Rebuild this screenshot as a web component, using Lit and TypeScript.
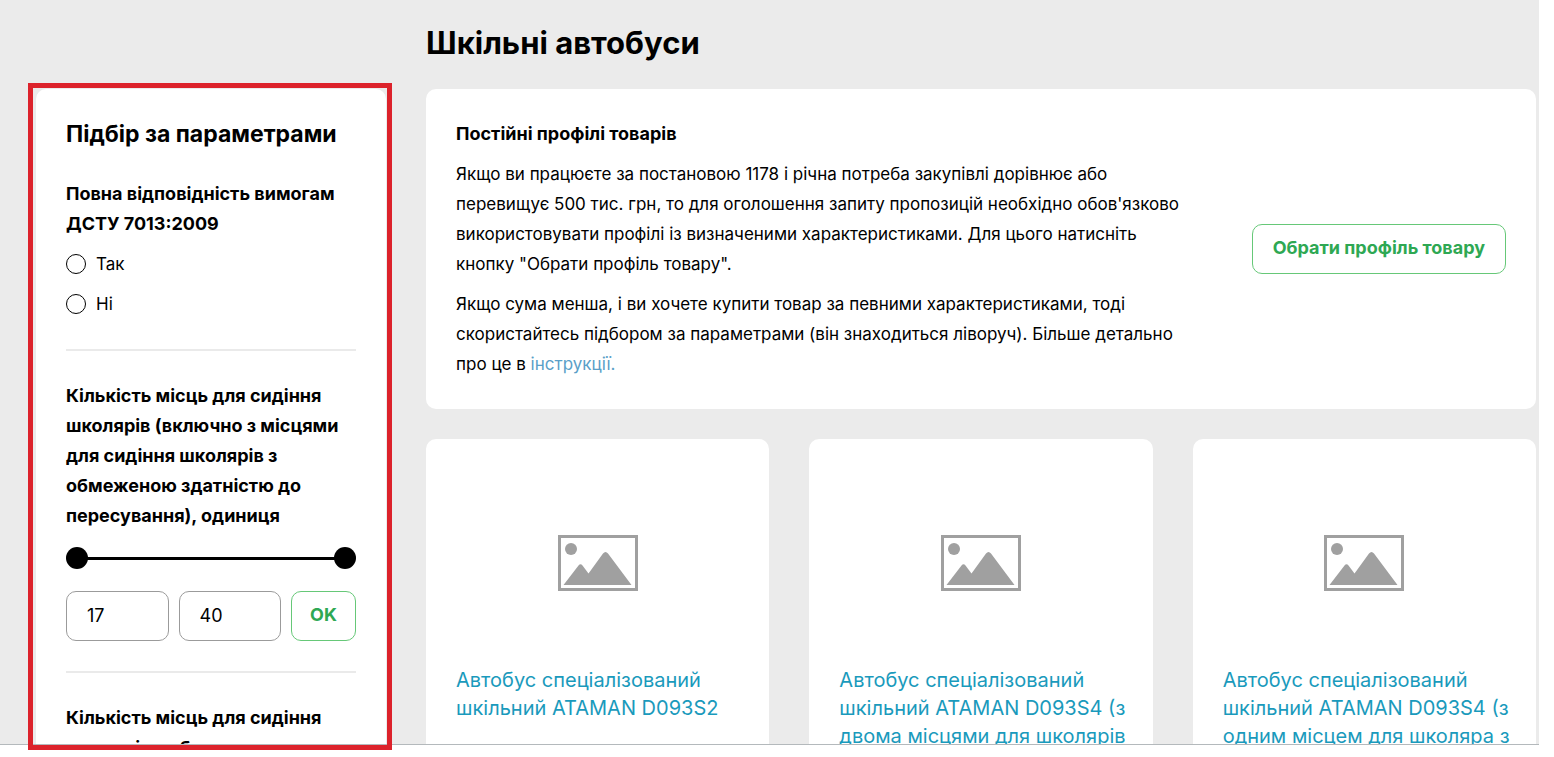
import { LitElement, html, css } from "lit";
import { customElement, state } from "lit/decorators.js";

@customElement("range-filter")
class RangeFilter extends LitElement {
  @state() low = 17;
  @state() high = 40;

  static styles = css`
    :host { display: block; }
    .sliders { display: grid; height: 22px; align-items: center; margin-top: 16px;
      background: linear-gradient(#000, #000) center / calc(100% - 22px) 3px no-repeat; }
    .slider { grid-area: 1 / 1; width: 100%; height: 22px; margin: 0; appearance: none;
      background: none; pointer-events: none; }
    .slider::-webkit-slider-thumb { appearance: none; width: 22px; height: 22px;
      border-radius: 50%; background: #000; pointer-events: auto; }
    .row { display: grid; grid-template-columns: 1fr 1fr 65px; gap: 10px; margin-top: 22px; }
    .box, .ok { box-sizing: border-box; width: 100%; height: 50px; border-radius: 10px;
      background: #fff; font: inherit; font-size: 18px; }
    .box { border: 1px solid #9b9b9b; padding: 0 20px 2px; color: #000; }
    .ok { border: 1px solid #66c878; padding: 0 0 2px; color: #2ea853; font-weight: 700; }
  `;

  render() {
    return html`
      <div class="sliders">
        <input class="slider" type="range" min="17" max="40" aria-label="Від" .value=${String(this.low)}
          @input=${(e: Event) => (this.low = Number((e.target as HTMLInputElement).value))} />
        <input class="slider" type="range" min="17" max="40" aria-label="До" .value=${String(this.high)}
          @input=${(e: Event) => (this.high = Number((e.target as HTMLInputElement).value))} />
      </div>
      <div class="row">
        <input class="box" type="text" inputmode="numeric" aria-label="Від" .value=${String(this.low)} />
        <input class="box" type="text" inputmode="numeric" aria-label="До" .value=${String(this.high)} />
        <button class="ok" type="button">OK</button>
      </div>
    `;
  }
}

@customElement("product-card")
class ProductCard extends LitElement {
  static properties = { name: {} };
  declare name: string;

  static styles = css`
    :host { display: block; background: #fff; border-radius: 10px; padding: 0 20px 30px 30px; }
    .photo { display: flex; align-items: center; justify-content: center; height: 217px;
      padding: 20px 0 0; margin-right: 10px; box-sizing: border-box; }
    .photo { height: 227px; }
    .title { display: block; font-size: 20px; line-height: 28px; color: #1a9abc; text-decoration: none; }
  `;

  render() {
    return html`
      <div class="photo">
        <svg width="80" height="56" viewBox="0 0 80 56" fill="#a0a0a0" aria-hidden="true">
          <rect x="1.5" y="1.5" width="77" height="53" fill="none" stroke="#a0a0a0" stroke-width="3" />
          <circle cx="13" cy="14" r="6" />
          <path d="M5.500 50 20.500 30.500Q22.500 28 24.500 30.500L30.500 38.500 45 18.500Q47.500 15.500 50 18.500L73.500 50Z" />
        </svg>
      </div>
      <a class="title" href="#">${this.name}</a>
    `;
  }
}

@customElement("app-root")
class AppRoot extends LitElement {
  static styles = css`
    :host { display: block; position: relative; height: 100vh; background: #fff; color: #000;
      font-family: Inter, "Liberation Sans", sans-serif; font-size: 17px; line-height: 30px; }
    .page { box-sizing: border-box; height: calc(100vh - 12px); margin-right: 15px; overflow: hidden;
      padding: 20px 3px 0 36px; background: #ebebeb; border-bottom: 1px solid #b4b9bc;
      display: grid; grid-template-columns: 350px minmax(0, 1fr); grid-template-rows: 69px auto; column-gap: 40px; }
    .heading { grid-column: 2; margin: 0; font-size: 31px; line-height: 46px; }
    .filters { grid-column: 1; padding: 30px; background: #fff; border-radius: 10px; align-self: start; }
    .filters-title { margin: 0 0 30px; font-size: 23px; line-height: 30px; }
    .group { margin: 0; padding: 0 0 30px; border: 0; border-bottom: 2px solid #eaeaea; margin-bottom: 30px; }
    .legend { padding: 0; font-size: 18px; font-weight: 700; }
    .option { display: flex; align-items: center; gap: 10px; margin-top: 10px; }
    .radio { appearance: none; width: 20px; height: 20px; margin: 0; border: 1px solid #000; border-radius: 50%; }
    .radio:checked { background: radial-gradient(#000 40%, #fff 45%); }
    .content { grid-column: 2; display: flex; flex-direction: column; gap: 30px; }
    .profile { display: flex; align-items: center; gap: 60px; padding: 30px; background: #fff; border-radius: 10px; }
    .text { flex: 1; }
    .text-title { margin: 0; font-size: 18px; line-height: 30px; }
    .para { margin: 10px 0 0; }
    .link { color: #5a9fc8; text-decoration: none; }
    .choose { height: 50px; padding: 0 20px 2px; border: 1px solid #66c878; border-radius: 10px;
      background: #fff; color: #2ea853; font: inherit; font-size: 18px; font-weight: 700; white-space: nowrap; }
    .products { display: grid; grid-template-columns: repeat(3, minmax(0, 1fr)); gap: 40px; }
    .marker { position: absolute; left: 28px; top: 83px; bottom: 7px; width: 364px; box-sizing: border-box;
      border: 5px solid #dc222b; pointer-events: none; }
  `;

  render() {
    return html`
      <div class="page">
        <h1 class="heading">Шкільні автобуси</h1>
        <aside class="filters">
          <h2 class="filters-title">Підбір за параметрами</h2>
          <fieldset class="group">
            <legend class="legend">Повна відповідність вимогам ДСТУ 7013:2009</legend>
            <label class="option"><input class="radio" type="radio" name="dstu" />Так</label>
            <label class="option"><input class="radio" type="radio" name="dstu" />Ні</label>
          </fieldset>
          <fieldset class="group">
            <legend class="legend">Кількість місць для сидіння школярів (включно з місцями для сидіння школярів з обмеженою здатністю до пересування), одиниця</legend>
            <range-filter></range-filter>
          </fieldset>
          <fieldset class="group">
            <legend class="legend">Кількість місць для сидіння школярів з обмеженою</legend>
          </fieldset>
        </aside>
        <main class="content">
          <section class="profile">
            <div class="text">
              <h3 class="text-title">Постійні профілі товарів</h3>
              <p class="para">Якщо ви працюєте за постановою 1178 і річна потреба закупівлі дорівнює або перевищує 500 тис. грн, то для оголошення запиту пропозицій необхідно обов'язково використовувати профілі із визначеними характеристиками. Для цього натисніть кнопку "Обрати профіль товару".</p>
              <p class="para">Якщо сума менша, і ви хочете купити товар за певними характеристиками, тоді скористайтесь підбором за параметрами (він знаходиться ліворуч). Більше детально про це в <a class="link" href="#">інструкції.</a></p>
            </div>
            <button class="choose" type="button">Обрати профіль товару</button>
          </section>
          <section class="products">
            <product-card name="Автобус спеціалізований шкільний ATAMAN D093S2"></product-card>
            <product-card name="Автобус спеціалізований шкільний ATAMAN D093S4 (з двома місцями для школярів"></product-card>
            <product-card name="Автобус спеціалізований шкільний ATAMAN D093S4 (з одним місцем для школяра з"></product-card>
          </section>
        </main>
      </div>
      <div class="marker"></div>
    `;
  }
}
